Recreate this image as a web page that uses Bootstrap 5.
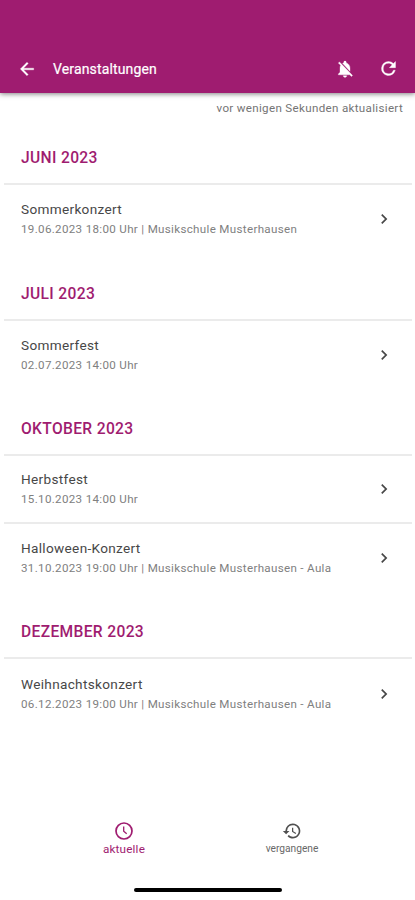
<!DOCTYPE html>
<html lang="de">
<head>
<meta charset="utf-8">
<meta name="viewport" content="width=device-width, initial-scale=1">
<title>Veranstaltungen</title>
<link href="https://cdn.jsdelivr.net/npm/bootstrap@5.3.0/dist/css/bootstrap.min.css" rel="stylesheet">
<style>
:root { --brand: #9f1c70; }
body { font-family: Roboto, "Liberation Sans", sans-serif; color: #505050; height: 900px; overflow: hidden; }
svg { display: block; flex: none; }
.topbar { height: 93px; background: var(--brand); padding: 54px 16px 0 17px; box-shadow: 0 1px 5px rgba(0,0,0,.5); }
.topbar-title { font-size: 14px; font-weight: 400; line-height: 20px; margin-left: 16px; letter-spacing: .14px; -webkit-text-stroke: .2px; }
.reload { margin-left: 23px; }
.updated { height: 24px; padding: 5px 12px 0 0; font-size: 11.6px; line-height: 20px; letter-spacing: .32px; color: #747474; }
.agenda { padding-right: 3px; }
.month { height: 68px; padding: 31px 17px 0; font-size: 15.6px; font-weight: 500; line-height: 20px; letter-spacing: .34px; color: var(--brand); }
.ruled { border-bottom: 2px solid #ebebeb; }
.event { height: 67.6px; padding: 1px 18px 0 17px; color: #474747; }
.event-name { font-size: 13.6px; line-height: 20px; letter-spacing: .32px; }
.event-info { font-size: 11.6px; line-height: 20px; letter-spacing: .32px; color: #808080; }
.tab { width: 169px; }
.tab-label { font-size: 10.2px; line-height: 16px; color: #686868; }
.tab.current { color: var(--brand); padding-left: 2px; }
.tab.current .tab-label { font-size: 11.7px; letter-spacing: .18px; color: var(--brand); }
.home-bar { width: 148px; height: 4px; background: #000; margin-top: 31px; margin-bottom: 8px; }
</style>
</head>
<body class="bg-white m-0 d-flex flex-column">
<header class="topbar text-white">
  <div class="d-flex align-items-center pt-1">
    <svg width="20" height="20" viewBox="0 0 24 24" fill="currentColor" stroke="currentColor" stroke-width=".4"><path d="M20 11H7.83l5.59-5.59L12 4l-8 8 8 8 1.41-1.41L7.83 13H20z"/></svg>
    <span class="topbar-title">Veranstaltungen</span>
    <svg class="ms-auto" width="20" height="20" viewBox="0 0 24 24" fill="currentColor" stroke="currentColor" stroke-width=".4"><path d="M20 18.69 7.84 6.14 5.27 3.49 4 4.76l2.8 2.8v.01c-.52.99-.8 2.16-.8 3.42v5l-2 2v1h13.73l2 2L21 19.72zM12 22c1.11 0 2-.89 2-2h-4c0 1.11.89 2 2 2zm6-7.32V11c0-3.08-1.64-5.64-4.5-6.32V4c0-.83-.67-1.5-1.5-1.5s-1.5.67-1.5 1.5v.68c-.15.03-.29.08-.42.12-.1.03-.2.07-.3.11-.24.1-.47.21-.69.33z"/></svg>
    <svg class="reload" width="21" height="21" viewBox="0 0 24 24" fill="currentColor" stroke="currentColor" stroke-width=".4"><path d="M17.65 6.35A7.96 7.96 0 0 0 12 4a8 8 0 1 0 7.73 10h-2.08A6 6 0 1 1 12 6c1.66 0 3.14.69 4.22 1.78L13 11h7V4z"/></svg>
  </div>
</header>
<div class="updated text-end">vor wenigen Sekunden aktualisiert</div>
<main class="agenda ps-1 flex-grow-1">
  <section>
    <div class="month ruled">JUNI 2023</div>
    <div class="event d-flex align-items-center justify-content-between">
      <div><div class="event-name">Sommerkonzert</div><div class="event-info">19.06.2023 18:00 Uhr | Musikschule Musterhausen</div></div>
      <svg width="20" height="20" viewBox="0 0 24 24" fill="currentColor"><path d="M8.59 16.59 13.17 12 8.59 7.41 10 6l6 6-6 6z"/></svg>
    </div>
  </section>
  <section>
    <div class="month ruled">JULI 2023</div>
    <div class="event d-flex align-items-center justify-content-between">
      <div><div class="event-name">Sommerfest</div><div class="event-info">02.07.2023 14:00 Uhr</div></div>
      <svg width="20" height="20" viewBox="0 0 24 24" fill="currentColor"><path d="M8.59 16.59 13.17 12 8.59 7.41 10 6l6 6-6 6z"/></svg>
    </div>
  </section>
  <section>
    <div class="month ruled">OKTOBER 2023</div>
    <div class="event ruled d-flex align-items-center justify-content-between">
      <div><div class="event-name">Herbstfest</div><div class="event-info">15.10.2023 14:00 Uhr</div></div>
      <svg width="20" height="20" viewBox="0 0 24 24" fill="currentColor"><path d="M8.59 16.59 13.17 12 8.59 7.41 10 6l6 6-6 6z"/></svg>
    </div>
    <div class="event d-flex align-items-center justify-content-between">
      <div><div class="event-name">Halloween-Konzert</div><div class="event-info">31.10.2023 19:00 Uhr | Musikschule Musterhausen - Aula</div></div>
      <svg width="20" height="20" viewBox="0 0 24 24" fill="currentColor"><path d="M8.59 16.59 13.17 12 8.59 7.41 10 6l6 6-6 6z"/></svg>
    </div>
  </section>
  <section>
    <div class="month ruled">DEZEMBER 2023</div>
    <div class="event d-flex align-items-center justify-content-between">
      <div><div class="event-name">Weihnachtskonzert</div><div class="event-info">06.12.2023 19:00 Uhr | Musikschule Musterhausen - Aula</div></div>
      <svg width="20" height="20" viewBox="0 0 24 24" fill="currentColor"><path d="M8.59 16.59 13.17 12 8.59 7.41 10 6l6 6-6 6z"/></svg>
    </div>
  </section>
</main>
<nav class="d-flex justify-content-center ps-1 pe-1">
  <div class="tab current d-flex flex-column align-items-center">
    <svg width="20" height="20" viewBox="0 0 20 20" fill="none" stroke="currentColor" stroke-width="1.7"><circle cx="10" cy="10" r="8"/><path d="M9.7 5.5v4.8l3 2.5" stroke-width="1.3"/></svg>
    <span class="tab-label">aktuelle</span>
  </div>
  <div class="tab d-flex flex-column align-items-center">
    <svg width="20" height="20" viewBox="0 0 24 24" fill="currentColor"><path d="M13 3a9 9 0 0 0-9 9H1l3.89 3.89.07.14L9 12H6a7 7 0 1 1 2.06 4.94l-1.42 1.42A9 9 0 1 0 13 3zm-1 5v5l4.28 2.54.72-1.21-3.5-2.08V8z"/></svg>
    <span class="tab-label">vergangene</span>
  </div>
</nav>
<div class="home-bar rounded-pill mx-auto"></div>
</body>
</html>
